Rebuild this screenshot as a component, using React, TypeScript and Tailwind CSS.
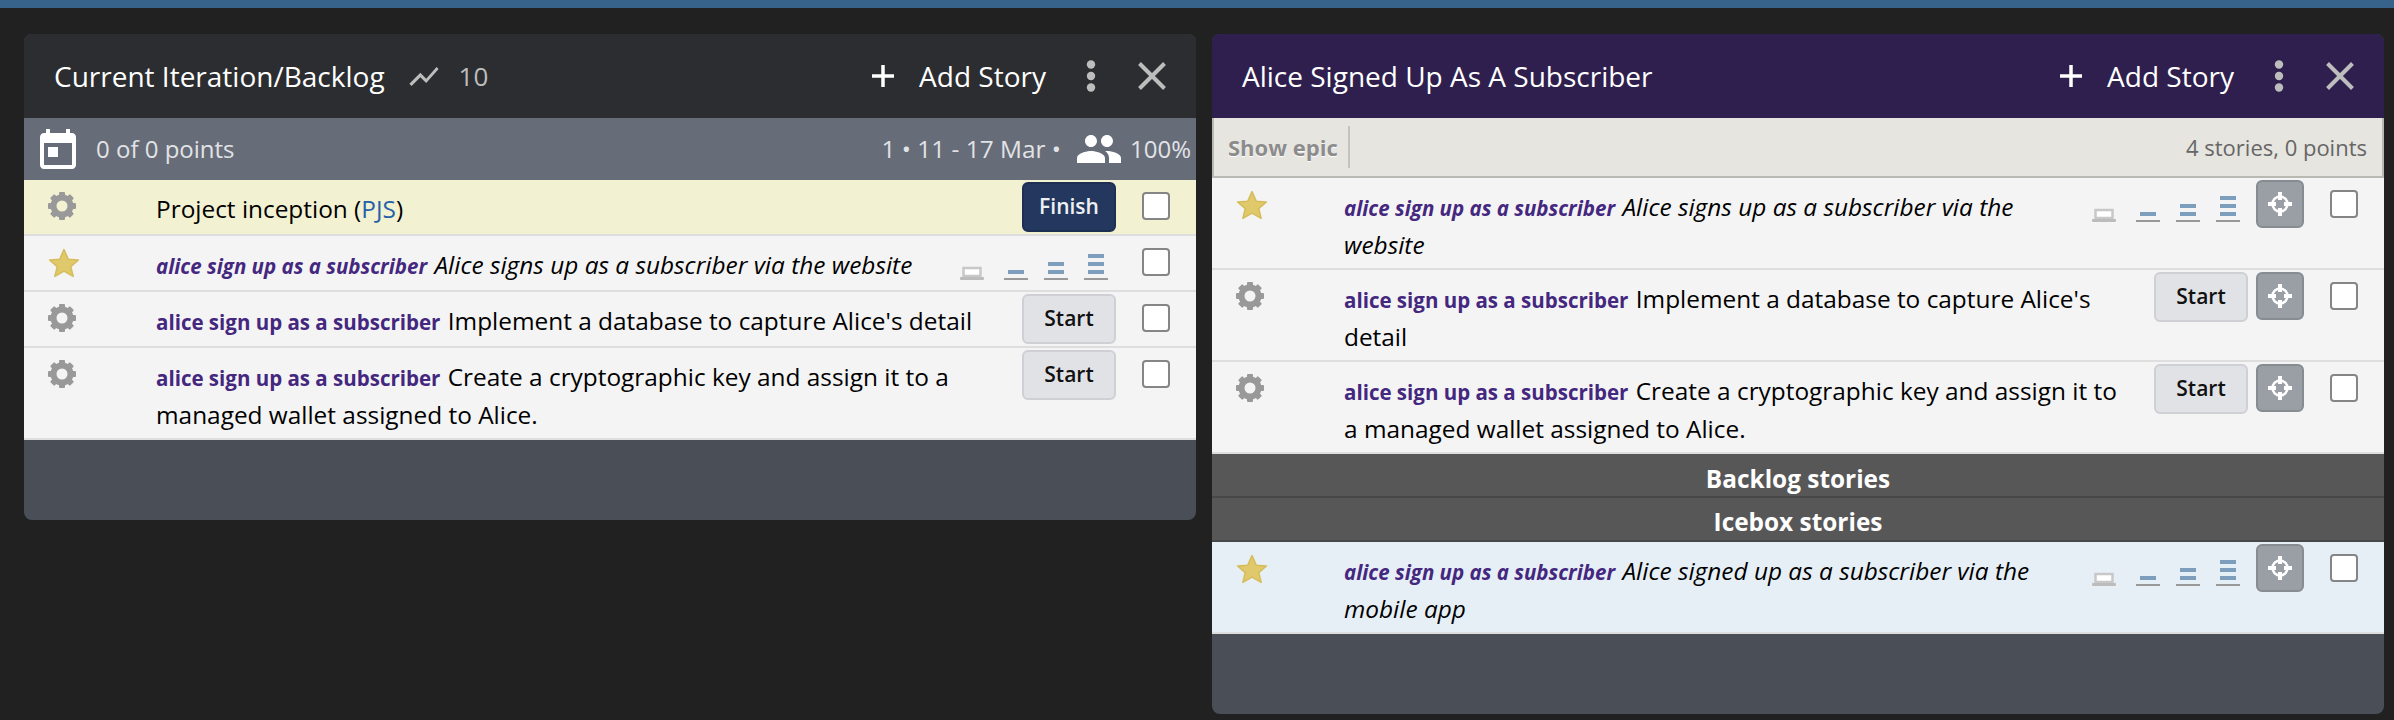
import React from 'react';

const Gear = () => (
  <svg width="28" height="28" viewBox="0 0 28 28" className="block">
    <circle cx="14" cy="14" r="8.5" fill="none" stroke="#999" strokeWidth="6" />
    {[0, 45, 90, 135, 180, 225, 270, 315].map((a) => (
      <rect key={a} x="11" y="0" width="6" height="6" rx="1" fill="#999" transform={`rotate(${a} 14 14)`} />
    ))}
  </svg>
);

const Star = () => (
  <svg width="32" height="30" viewBox="0 0 30 28" className="block">
    <polygon
      points="15,1.5 19,10.5 28.5,11.2 21.3,17.4 23.6,26.5 15,21.6 6.4,26.5 8.7,17.4 1.5,11.2 11,10.5"
      fill="#e0c96b"
      stroke="#d6bd5c"
      strokeWidth="1.5"
      strokeLinejoin="round"
    />
  </svg>
);

const Estimate = ({ bars }: { bars: number }) => (
  <svg width="24" height="26" viewBox="0 0 24 26" className="block">
    {bars === 0 ? (
      <>
        <rect x="3.5" y="14" width="17" height="8" fill="#fff" stroke="#c8c8c8" strokeWidth="2.5" />
        <rect x="0" y="23" width="24" height="3" rx="1" fill="#bcbcbc" />
      </>
    ) : (
      <>
        <rect x="0" y="24" width="24" height="2" fill="#999" />
        {[16, 8, 0].slice(0, bars).map((y) => (
          <rect key={y} x="4" y={y} width="16" height="4" fill="#7d9fbd" />
        ))}
      </>
    )}
  </svg>
);

const Estimates = () => (
  <div className="flex gap-4 mt-[18px]">
    <div className="mr-1">
      <Estimate bars={0} />
    </div>
    <Estimate bars={1} />
    <Estimate bars={2} />
    <Estimate bars={3} />
  </div>
);

const Target = () => (
  <div className="shrink-0 mt-0.5 w-12 h-12 rounded-md bg-[#9a9fa6] border-2 border-[#878c93] flex items-center justify-center">
    <svg width="24" height="24" viewBox="0 0 24 24">
      <circle cx="12" cy="12" r="7.5" fill="none" stroke="#fff" strokeWidth="2.5" />
      <rect x="10" y="0" width="4" height="8" fill="#fff" />
      <rect x="10" y="16" width="4" height="8" fill="#fff" />
      <rect x="0" y="10" width="8" height="4" fill="#fff" />
      <rect x="16" y="10" width="8" height="4" fill="#fff" />
    </svg>
  </div>
);

const Check = () => (
  <div className="shrink-0 mt-3 ml-[26px] w-7 h-7 rounded bg-white border-2 border-[#858585]" />
);

const ActionButton = ({ label }: { label: string }) => (
  <div
    className={
      label === 'Finish'
        ? 'shrink-0 mt-0.5 w-[94px] h-[50px] rounded-md border-2 border-[#1d2f52] bg-[#24385f] text-[#eef0f4] text-[21px] font-semibold flex items-center justify-center'
        : 'shrink-0 mt-0.5 w-[94px] h-[50px] rounded-md border-2 border-[#cfd0d5] bg-[#e1e2e6] text-[#111] text-[21px] font-semibold flex items-center justify-center'
    }
  >
    {label}
  </div>
);

interface StoryProps {
  icon: 'gear' | 'star';
  label?: string;
  text: React.ReactNode;
  italic?: boolean;
  action?: string;
  estimates?: boolean;
  target?: boolean;
  bg?: string;
  textWidth: string;
}

const Story = ({ icon, label, text, italic, action, estimates, target, bg = 'bg-[#f4f4f4]', textWidth }: StoryProps) => (
  <div className={`flex items-start min-h-14 border-b-2 border-[#dedede] ${bg}`}>
    <div className="shrink-0 w-[132px] mt-3 pl-6">{icon === 'gear' ? <Gear /> : <Star />}</div>
    <div className={`${textWidth} shrink-0 pt-2.5 pb-1 text-[24.4px] leading-[38px] text-black ${italic ? 'italic' : ''}`}>
      {label && <span className="text-[20.5px] leading-none font-bold text-[#44277f] mr-px">{label}</span>} {text}
    </div>
    <div className="flex-1" />
    {estimates && <Estimates />}
    {action && <ActionButton label={action} />}
    {target && (
      <div className={estimates ? 'ml-4' : 'ml-2'}>
        <Target />
      </div>
    )}
    <div className={estimates && !target ? 'ml-2' : ''}>
      <Check />
    </div>
    <div className="shrink-0 w-[26px]" />
  </div>
);

const PanelHeader = ({ title, bg, children }: { title: string; bg: string; children?: React.ReactNode }) => (
  <div className={`h-[84px] flex items-center px-[30px] text-white ${bg}`}>
    <span className="text-[28px]">{title}</span>
    {children}
    <div className="flex-1" />
    <svg width="24" height="24" viewBox="0 0 24 24">
      <path d="M12 1v22M1 12h22" stroke="#fff" strokeWidth="3.5" fill="none" />
    </svg>
    <span className="text-[28px] ml-6">Add Story</span>
    <svg width="10" height="32" viewBox="0 0 10 32" className="ml-10">
      <circle cx="5" cy="4.5" r="4.2" fill="#bdbdbd" />
      <circle cx="5" cy="16" r="4.2" fill="#bdbdbd" />
      <circle cx="5" cy="27.5" r="4.2" fill="#bdbdbd" />
    </svg>
    <svg width="28" height="28" viewBox="0 0 28 28" className="ml-[42px]">
      <path d="M1.5 1.5l25 25M26.5 1.5l-25 25" stroke="#bdbdbd" strokeWidth="4" fill="none" />
    </svg>
  </div>
);

const StoryLabel = 'alice sign up as a subscriber';

export default function App() {
  return (
    <div className="h-screen overflow-hidden bg-[#212121] font-['Open_Sans',sans-serif]">
      <div className="h-2 bg-[#37628a]" />
      <div className="flex gap-4 pl-6 pt-[26px] items-start">
        {/* Current iteration panel */}
        <div className="w-[1172px] rounded-lg overflow-hidden bg-[#4a4f57]">
          <PanelHeader title="Current Iteration/Backlog" bg="bg-[#2c2d30]">
            <svg width="30" height="19" viewBox="2 5.5 20 13" className="ml-6">
              <path d="M3.5 18.49l6-6.01 4 4L22 6.92l-1.41-1.41-7.09 7.97-4-4L2 16.99z" fill="#bdbdbd" />
            </svg>
            <span className="text-[26px] text-[#bdbdbd] ml-5">10</span>
          </PanelHeader>
          <div className="h-[62px] flex items-center bg-[#666c78] pl-4 pr-[5px] text-[24px] text-[#e2e3e6]">
            <svg width="36" height="40" viewBox="3 1 18 20" fill="#fff">
              <path d="M19 3h-1V1h-2v2H8V1H6v2H5c-1.11 0-1.99.9-1.99 2L3 19c0 1.1.89 2 2 2h14c1.1 0 2-.9 2-2V5c0-1.1-.9-2-2-2zm0 16H5V8h14v11zM7 10h5v5H7z" />
            </svg>
            <span className="ml-5">0 of 0 points</span>
            <div className="flex-1" />
            <span className="text-[24.4px]">1 • 11 - 17 Mar •</span>
            <svg width="44" height="28" viewBox="1 5 22 14" fill="#fff" className="ml-4">
              <path d="M16 11c1.66 0 2.99-1.34 2.99-3S17.66 5 16 5c-1.66 0-3 1.34-3 3s1.34 3 3 3zm-8 0c1.66 0 2.99-1.34 2.99-3S9.66 5 8 5C6.34 5 5 6.34 5 8s1.34 3 3 3zm0 2c-2.33 0-7 1.17-7 3.5V19h14v-2.5c0-2.33-4.67-3.5-7-3.5zm8 0c-.29 0-.62.02-.97.05 1.16.84 1.97 1.97 1.97 3.45V19h6v-2.5c0-2.33-4.67-3.5-7-3.5z" />
            </svg>
            <span className="ml-[9px]">100%</span>
          </div>
          <Story
            icon="gear"
            textWidth="w-[850px]"
            bg="bg-[#f2f1d2]"
            text={
              <>
                Project inception (<span className="text-[#2561a8]">PJS</span>)
              </>
            }
            action="Finish"
          />
          <Story
            icon="star"
            textWidth="w-[800px]"
            italic
            label={StoryLabel}
            text="Alice signs up as a subscriber via the website"
            estimates
          />
          <Story
            icon="gear"
            textWidth="w-[850px]"
            label={StoryLabel}
            text="Implement a database to capture Alice's detail"
            action="Start"
          />
          <Story
            icon="gear"
            textWidth="w-[850px]"
            label={StoryLabel}
            text="Create a cryptographic key and assign it to a managed wallet assigned to Alice."
            action="Start"
          />
          <div className="h-20" />
        </div>

        {/* Epic panel */}
        <div className="w-[1172px] rounded-lg overflow-hidden bg-[#4a4f57]">
          <PanelHeader title="Alice Signed Up As A Subscriber" bg="bg-[#2f1f4e]" />
          <div className="h-[60px] flex items-center bg-[#e6e5e0] border-x-2 border-b-2 border-[#b9b9b3] pl-3.5 pr-[15px]">
            <span className="text-[22px] font-bold text-[#8c8c8c] [text-shadow:0_1px_1px_#fff]">Show epic</span>
            <div className="w-0.5 h-[42px] bg-[#c4c4be] ml-2.5" />
            <div className="flex-1" />
            <span className="text-[22px] text-[#666]">4 stories, 0 points</span>
          </div>
          <Story
            icon="star"
            textWidth="w-[745px]"
            italic
            label={StoryLabel}
            text="Alice signs up as a subscriber via the website"
            estimates
            target
          />
          <Story
            icon="gear"
            textWidth="w-[785px]"
            label={StoryLabel}
            text="Implement a database to capture Alice's detail"
            action="Start"
            target
          />
          <Story
            icon="gear"
            textWidth="w-[785px]"
            label={StoryLabel}
            text="Create a cryptographic key and assign it to a managed wallet assigned to Alice."
            action="Start"
            target
          />
          <div className="h-11 pt-2 flex items-center justify-center bg-[#575757] border-b-2 border-[#484848] text-white text-[24.4px] font-bold">
            Backlog stories
          </div>
          <div className="h-11 pt-1.5 flex items-center justify-center bg-[#575757] border-b-2 border-[#484848] text-white text-[24.4px] font-bold">
            Icebox stories
          </div>
          <Story
            icon="star"
            textWidth="w-[745px]"
            bg="bg-[#e7eff6]"
            italic
            label={StoryLabel}
            text="Alice signed up as a subscriber via the mobile app"
            estimates
            target
          />
          <div className="h-20" />
        </div>
      </div>
    </div>
  );
}
